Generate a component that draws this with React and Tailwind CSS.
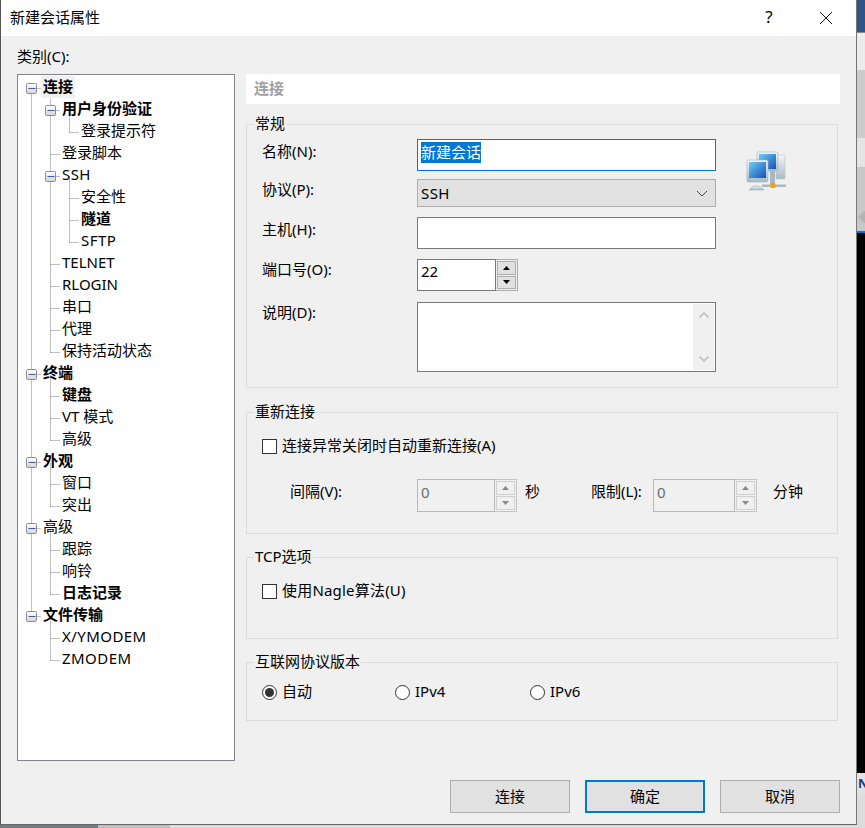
import React from "react";

const treeItems = [
  { text: "连接", level: 0, box: true, bold: true, active: true },
  { text: "用户身份验证", level: 1, box: true, bold: true },
  { text: "登录提示符", level: 2 },
  { text: "登录脚本", level: 1 },
  { text: "SSH", level: 1, box: true, wide: true },
  { text: "安全性", level: 2 },
  { text: "隧道", level: 2, bold: true },
  { text: "SFTP", level: 2, wide: true },
  { text: "TELNET", level: 1 },
  { text: "RLOGIN", level: 1 },
  { text: "串口", level: 1 },
  { text: "代理", level: 1 },
  { text: "保持活动状态", level: 1 },
  { text: "终端", level: 0, box: true, bold: true },
  { text: "键盘", level: 1, bold: true },
  { text: "VT 模式", level: 1 },
  { text: "高级", level: 1 },
  { text: "外观", level: 0, box: true, bold: true },
  { text: "窗口", level: 1 },
  { text: "突出", level: 1 },
  { text: "高级", level: 0, box: true },
  { text: "跟踪", level: 1 },
  { text: "响铃", level: 1 },
  { text: "日志记录", level: 1, bold: true },
  { text: "文件传输", level: 0, box: true, bold: true },
  { text: "X/YMODEM", level: 1, wide: true },
  { text: "ZMODEM", level: 1, wide: true },
];

const rowY = (i) => 88.5 + i * 22;
const lineX = [31.5, 50.5, 69.5];
const stubEnd = [41, 60, 79];

// vertical dotted runs: [level, first row, last row]
const runs = [
  [0, 0, 24],
  [1, 0, 12],
  [1, 13, 16],
  [1, 17, 19],
  [1, 20, 23],
  [1, 24, 26],
  [2, 1, 2],
  [2, 4, 7],
];

const TreeLines = () => (
  <svg className="absolute left-0 top-0" width="216" height="685" viewBox="18 75 216 685">
    <defs>
      <linearGradient id="boxFill" x1="0" y1="0" x2="0" y2="1">
        <stop offset="0" stopColor="#ffffff" />
        <stop offset="1" stopColor="#d4d4d4" />
      </linearGradient>
    </defs>
    {runs.map(([lvl, a, b], i) => (
      <line key={i} x1={lineX[lvl]} x2={lineX[lvl]} y1={rowY(a) + 1} y2={rowY(b)} stroke="#808080" strokeDasharray="1 1" />
    ))}
    {treeItems.map((item, i) => (
      <g key={i}>
        <line
          x1={lineX[item.level]}
          x2={stubEnd[item.level]}
          y1={rowY(i)}
          y2={rowY(i)}
          stroke="#808080"
          strokeDasharray="1 1"
        />
        {item.box && (
          <g>
            <rect
              x={lineX[item.level] - 5}
              y={rowY(i) - 5}
              width="10"
              height="10"
              rx="1"
              fill="url(#boxFill)"
              stroke="#8c8c8c"
            />
            <line
              x1={lineX[item.level] - 3}
              x2={lineX[item.level] + 4}
              y1={rowY(i)}
              y2={rowY(i)}
              stroke="#3f5bb0"
            />
          </g>
        )}
      </g>
    ))}
  </svg>
);

const Tree = () => (
  <div className="relative w-[218px] h-[687px] bg-white border border-[#82828c] pt-px overflow-hidden">
    <TreeLines />
    {treeItems.map((item, i) => (
      <div
        key={i}
        className={
          "relative flex h-[22px] " +
          (item.level === 0 ? "pl-[23px]" : item.level === 1 ? "pl-[42px]" : "pl-[61px]")
        }
      >
        <span
          className={
            "h-[22px] leading-[20px] px-[2px] " +
            (item.bold ? "font-bold " : "") +
            (item.wide ? "tracking-[0.45px] " : "") +
            (item.active ? "bg-[#f0f0f0]" : "")
          }
        >
          {item.text}
        </span>
      </div>
    ))}
  </div>
);

const Group = ({ title, className, children }) => (
  <fieldset className={"border border-[#dcdcdc] w-[592px] " + className}>
    <legend className="ml-[7px] px-px h-[22px] leading-[20px]">{title}</legend>
    {children}
  </fieldset>
);

const Triangle = ({ up, disabled }) => (
  <svg width="7" height="4" viewBox="0 0 7 4">
    <path d={up ? "M3.5 0 L7 4 L0 4 Z" : "M0 0 L7 0 L3.5 4 Z"} fill={disabled ? "#8a8a8a" : "#000000"} />
  </svg>
);

const SpinButtons = ({ disabled }) => (
  <div className={"w-[22px] flex flex-col gap-[1px] p-px border-y border-r " + (disabled ? "border-[#c4c4c4] bg-[#f0f0f0]" : "border-[#adadad] bg-[#f0f0f0]")}>
    <div className={"flex-1 flex items-center justify-center border " + (disabled ? "bg-[#f0f0f0] border-[#d0d0d0]" : "bg-[#e1e1e1] border-[#adadad]")}>
      <Triangle up disabled={disabled} />
    </div>
    <div className={"flex-1 flex items-center justify-center border " + (disabled ? "bg-[#f0f0f0] border-[#d0d0d0]" : "bg-[#e1e1e1] border-[#adadad]")}>
      <Triangle disabled={disabled} />
    </div>
  </div>
);

const DisabledSpin = ({ width }) => (
  <div className={"flex h-[33px] " + width}>
    <div className="flex-1 border border-[#b8b8b8] pl-[3px] leading-[24px] text-[#6d6d6d]">0</div>
    <SpinButtons disabled />
  </div>
);

const Checkbox = () => <span className="w-[15px] h-[15px] border border-[#333333] bg-white" />;

const Radio = ({ checked, label, className }) => (
  <div className={"flex items-center gap-[5px] " + className}>
    <span className="w-[15px] h-[15px] rounded-full border border-[#333333] bg-white flex items-center justify-center">
      {checked && <span className="w-[9px] h-[9px] rounded-full bg-[#333333]" />}
    </span>
    <span className="pb-[1px]">{label}</span>
  </div>
);

const NetworkIcon = () => (
  <svg width="43" height="42" viewBox="745 148 43 42" className="mt-[11px] ml-[29px]">
    <defs>
      <linearGradient id="screen" x1="0" y1="0" x2="1" y2="1">
        <stop offset="0" stopColor="#6fcdf5" />
        <stop offset="1" stopColor="#1450b8" />
      </linearGradient>
      <linearGradient id="metal" x1="0" y1="0" x2="0" y2="1">
        <stop offset="0" stopColor="#f2f6f8" />
        <stop offset="1" stopColor="#a9bac4" />
      </linearGradient>
    </defs>
    <rect x="776" y="153" width="9" height="24" rx="1" fill="url(#metal)" stroke="#b5c2ca" strokeWidth="0.6" />
    <rect x="757" y="150" width="21" height="19" rx="1.5" fill="url(#metal)" stroke="#a4b4be" strokeWidth="0.6" />
    <rect x="759" y="152" width="17" height="15" fill="url(#screen)" />
    <rect x="770" y="169" width="5" height="13" fill="#aab8c0" />
    <path d="M749 188 Q756 179 764 188 Z" fill="url(#metal)" stroke="#9fb0ba" strokeWidth="0.6" />
    <rect x="747" y="158" width="21" height="22" rx="1.5" fill="url(#metal)" stroke="#a4b4be" strokeWidth="0.6" />
    <rect x="749" y="160" width="17" height="16" fill="url(#screen)" />
    <rect x="762" y="182.5" width="24" height="2.5" fill="#a9bac4" />
    <rect x="770.5" y="181" width="5" height="5" rx="1" fill="#f5a000" />
  </svg>
);

const BottomButton = ({ children, primary }) => (
  <div
    className={
      "w-[120px] h-[33px] bg-[#e1e1e1] flex items-center justify-center " +
      (primary ? "border-2 border-[#0078d7]" : "border border-[#adadad]")
    }
  >
    {children}
  </div>
);

const BehindStrip = () => (
  <div className="w-2 flex flex-col overflow-hidden">
    <div className="h-[32px] bg-[#2f5687]" />
    <div className="h-px bg-[#888888]" />
    <div className="h-[37px] bg-[#ececec]" />
    <div className="h-[68px] bg-[#cccccc]" />
    <div className="h-[29px] bg-[#e4e4e4]" />
    <div className="h-[64px] bg-[#c8c8c8] flex items-end pb-[8px]">
      <svg width="8" height="12" viewBox="0 0 8 12">
        <path d="M1 6 L7 0 L8 0 L8 12 L7 12 Z" fill="#b4b4b4" />
      </svg>
    </div>
    <div className="h-[2px] bg-[#0078d7]" />
    <div className="h-[540px] bg-black" />
    <div className="h-[20px] bg-[#e2e2e2] pl-[1px] font-bold text-[13px] leading-[20px] text-[#1c3c78]">N</div>
    <div className="flex-1 bg-[#dddddd]" />
  </div>
);

const App = () => {
  return (
    <div className="w-[865px] h-[828px] overflow-hidden flex flex-col bg-[#dddddd] text-black text-[15px] font-['Noto_Sans','Noto_Sans_CJK_SC',sans-serif]">
      <div className="flex h-[825px]">
        <div className="w-[857px] h-[825px] bg-[#f0f0f0] border-l border-r border-b border-l-[#555555] border-r-[#777777] border-b-[#666666] flex flex-col">
          {/* title bar */}
          <div className="h-[36px] bg-white flex items-center pl-[9px] shrink-0">
            <span className="flex-1 pb-[2px]">新建会话属性</span>
            <span className="text-[17px] w-[12px] text-center pb-[2px]">?</span>
            <svg width="14" height="14" viewBox="0 0 14 14" className="ml-[44px] mr-[23px]">
              <path d="M1 1 L13 13 M13 1 L1 13" stroke="#111111" strokeWidth="1" fill="none" />
            </svg>
          </div>

          <div className="flex pl-4 gap-[11px]">
            {/* category tree */}
            <div className="flex flex-col pt-[10px]">
              <div className="h-[22px] leading-[20px] mb-[6px]">类别(C):</div>
              <Tree />
            </div>

            {/* right panel */}
            <div className="w-[594px] pt-[38px]">
              <div className="h-[30px] bg-white pl-2 leading-[29px] text-[#a0a0a0] font-bold">连接</div>

              <Group title="常规" className="h-[275px] mt-[9px]">
                <div className="flex pl-[15px] pt-1">
                  <div className="flex flex-col">
                    <div className="flex">
                      <label className="w-[155px] leading-[24px]">名称(N):</label>
                      <div className="w-[299px] h-[32px] bg-white border border-[#0078d7] pl-[3px] pt-[2px]">
                        <div className="w-fit h-[21px] leading-[20px] bg-[#0078d7] text-white">新建会话</div>
                      </div>
                    </div>
                    <div className="flex mt-2">
                      <label className="w-[155px] leading-[20px]">协议(P):</label>
                      <div className="w-[299px] h-[28px] bg-[#e1e1e1] border border-[#adadad] pl-[3px] flex items-center justify-between pr-[7px]">
                        <span className="tracking-[0.45px]">SSH</span>
                        <svg width="12" height="7" viewBox="0 0 12 7">
                          <path d="M1 1 L6 6 L11 1" stroke="#444444" fill="none" />
                        </svg>
                      </div>
                    </div>
                    <div className="flex mt-[10px]">
                      <label className="w-[155px] leading-[24px]">主机(H):</label>
                      <div className="w-[299px] h-[32px] bg-white border border-[#7a7a7a]" />
                    </div>
                    <div className="flex mt-[10px]">
                      <label className="w-[155px] leading-[20px]">端口号(O):</label>
                      <div className="w-[79px] h-[32px] bg-white border border-[#7a7a7a] pl-[3px] leading-[23px]">22</div>
                      <SpinButtons />
                    </div>
                    <div className="flex mt-[11px]">
                      <label className="w-[155px] leading-[20px]">说明(D):</label>
                      <div className="w-[299px] h-[70px] bg-white border border-[#7a7a7a] flex justify-end p-px">
                        <div className="w-[21px] bg-[#f0f0f0] flex flex-col items-center justify-between py-[8px]">
                          <svg width="10" height="6" viewBox="0 0 10 6">
                            <path d="M0.5 5.5 L5 1 L9.5 5.5" stroke="#c0c0c0" strokeWidth="1.6" fill="none" />
                          </svg>
                          <svg width="10" height="6" viewBox="0 0 10 6">
                            <path d="M0.5 0.5 L5 5 L9.5 0.5" stroke="#c0c0c0" strokeWidth="1.6" fill="none" />
                          </svg>
                        </div>
                      </div>
                    </div>
                  </div>
                  <NetworkIcon />
                </div>
              </Group>

              <Group title="重新连接" className="h-[133px] mt-[13px]">
                <div className="flex items-center gap-[5px] pl-[15px] mt-[12px] h-[22px]">
                  <Checkbox />
                  <span className="pb-[2px]">连接异常关闭时自动重新连接(A)</span>
                </div>
                <div className="flex pl-[43px] mt-[22px] leading-[24px]">
                  <span className="w-[127px]">间隔(V):</span>
                  <DisabledSpin width="w-[100px]" />
                  <span className="ml-2 w-[66px]">秒</span>
                  <span className="w-[62px]">限制(L):</span>
                  <DisabledSpin width="w-[104px]" />
                  <span className="ml-4">分钟</span>
                </div>
              </Group>

              <Group title="TCP选项" className="h-[93px] mt-3">
                <div className="flex items-center gap-[5px] pl-[15px] mt-[12px] h-[22px]">
                  <Checkbox />
                  <span className="pb-[2px] tracking-[0.2px]">使用Nagle算法(U)</span>
                </div>
              </Group>

              <Group title="互联网协议版本" className="h-[70px] mt-3">
                <div className="flex pl-[15px] mt-2 h-[22px]">
                  <Radio checked label="自动" className="w-[133px]" />
                  <Radio label="IPv4" className="w-[135px]" />
                  <Radio label="IPv6" />
                </div>
              </Group>
            </div>
          </div>

          {/* dialog buttons */}
          <div className="flex justify-end gap-[15px] pr-4 mt-[19px]">
            <BottomButton>连接</BottomButton>
            <BottomButton primary>确定</BottomButton>
            <BottomButton>取消</BottomButton>
          </div>
        </div>
        <BehindStrip />
      </div>

      {/* what shows below the dialog */}
      <div className="flex-1 flex">
        <div className="w-[98px] bg-[#6f7f88]" />
        <div className="w-[72px] bg-[#c0c0c0]" />
        <div className="flex-1 bg-[#dddddd]" />
      </div>
    </div>
  );
};

export default App;
